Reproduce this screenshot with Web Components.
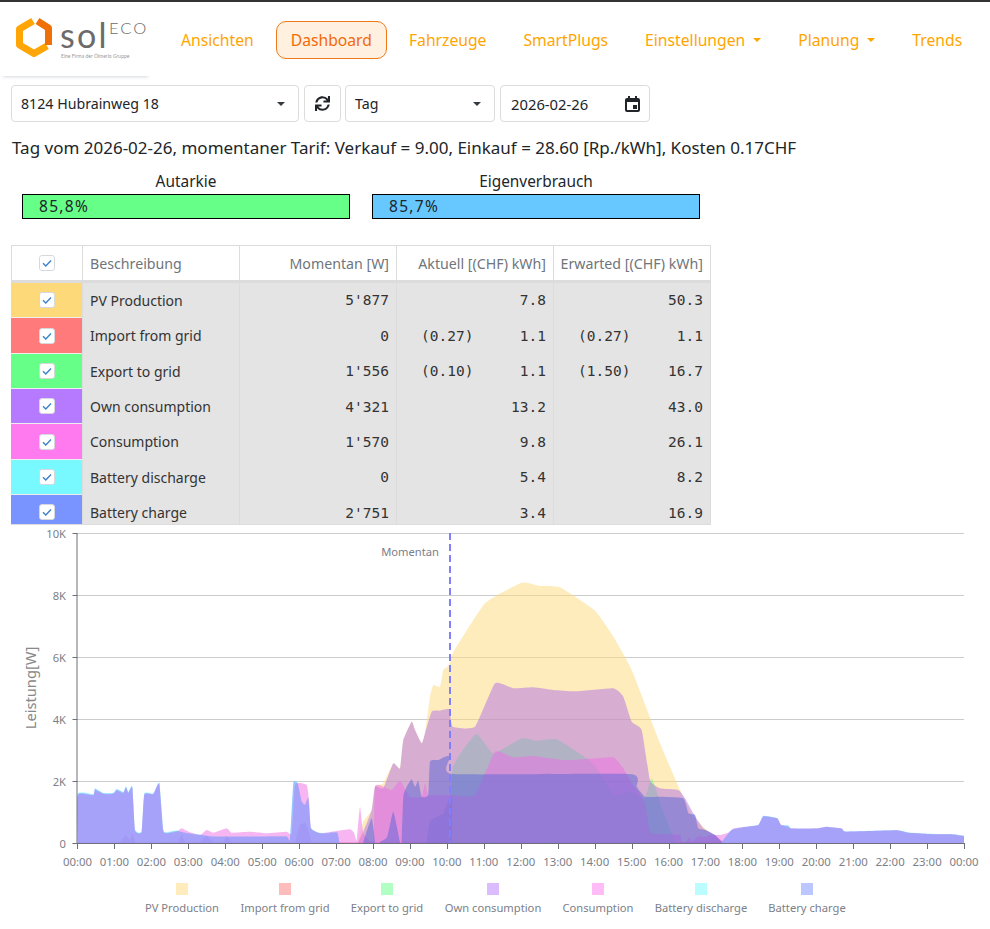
<!DOCTYPE html>
<html lang="de">
<head>
<meta charset="utf-8">
<title>solECO Dashboard</title>
<style>
  html, body { margin: 0; background: #fff; }
  body { font-family: "Noto Sans", "Open Sans", sans-serif; color: #212529; }
</style>
</head>
<body>
<app-navbar>
  <nav-link>Ansichten</nav-link>
  <nav-link active>Dashboard</nav-link>
  <nav-link>Fahrzeuge</nav-link>
  <nav-link>SmartPlugs</nav-link>
  <nav-link caret>Einstellungen</nav-link>
  <nav-link caret>Planung</nav-link>
  <nav-link>Trends</nav-link>
</app-navbar>

<control-bar></control-bar>

<page-title>Tag vom 2026-02-26, momentaner Tarif: Verkauf = 9.00, Einkauf = 28.60 [Rp./kWh], Kosten 0.17CHF</page-title>

<gauge-row>
  <gauge-bar label="Autarkie" color="#66ff88">85,8%</gauge-bar>
  <gauge-bar label="Eigenverbrauch" color="#66c8ff">85,7%</gauge-bar>
</gauge-row>

<energy-table>
  <energy-row color="#fdd97a" now="5'877" cur="7.8" exp="50.3">PV Production</energy-row>
  <energy-row color="#ff7a7a" now="0" curcost="(0.27)" cur="1.1" expcost="(0.27)" exp="1.1">Import from grid</energy-row>
  <energy-row color="#66ff88" now="1'556" curcost="(0.10)" cur="1.1" expcost="(1.50)" exp="16.7">Export to grid</energy-row>
  <energy-row color="#b57aff" now="4'321" cur="13.2" exp="43.0">Own consumption</energy-row>
  <energy-row color="#ff7aee" now="1'570" cur="9.8" exp="26.1">Consumption</energy-row>
  <energy-row color="#77f9ff" now="0" cur="5.4" exp="8.2">Battery discharge</energy-row>
  <energy-row color="#7a94ff" now="2'751" cur="3.4" exp="16.9">Battery charge</energy-row>
</energy-table>

<energy-chart></energy-chart>

<script>
const CHECK = `<svg width="16" height="16" viewBox="0 0 16 16"><rect x=".5" y=".5" width="15" height="15" rx="2.5" fill="#fff" stroke="#d5d9de"/><path d="M4 8.2l2.8 2.7L12 5.4" fill="none" stroke="#3c82c8" stroke-width="1.4"/></svg>`;

class AppNavbar extends HTMLElement {
  constructor(){
    super();
    this.attachShadow({mode:"open"});
    this.shadowRoot.innerHTML = `
    <style>
      :host { display: flex; border-top: 2px solid #333; height: 74px; background: #fff; }
      .logo { flex: 0 0 151px; height: 74px; box-shadow: 0 4px 3px -3px rgba(30,40,80,.18); }
      svg { display: block; }
      nav { display: flex; align-items: center; margin-left: 11.5px; height: 76px; }
    </style>
    <div class="logo">
      <svg width="151" height="74" viewBox="0 2 151 74">
        <polyline points="33,21 19.500,29 19.500,45 34,53.500 47,46" fill="none" stroke="#ffa506" stroke-width="7" stroke-linejoin="round"/>
        <polyline points="37.500,21 48.500,28 48.500,45" fill="none" stroke="#f07008" stroke-width="7" stroke-linejoin="round"/>
        <text x="60" y="48" font-family="Lato, sans-serif" font-size="34" fill="#6b6b6b" letter-spacing="2.200">sol</text>
        <text x="109" y="34" font-family="Lato, sans-serif" font-weight="300" font-size="16.500" fill="#6b6b6b" letter-spacing="2">ECO</text>
        <text x="61" y="58" font-family="Lato, sans-serif" font-size="5" fill="#999">Eine Firma der Ölmerlo Gruppe</text>
      </svg>
    </div>
    <nav><slot></slot></nav>`;
  }
}

class NavLink extends HTMLElement {
  constructor(){
    super();
    this.attachShadow({mode:"open"});
  }
  connectedCallback(){
    this.shadowRoot.innerHTML = `
    <style>
      :host { display: block; margin: 0 3.5px; }
      div { display: flex; align-items: center; gap: 8px; height: 36px; padding: 0 14px; border: 1px solid transparent; border-radius: 10px;
            color: #ffa500; font-size: 15.700px; white-space: nowrap; }
      :host([active]) div { border-color: #f07a1a; background: #fff0e0; color: #f26a08; }
      i { width: 0; height: 0; border: 4px solid transparent; border-top-color: #ffa500; border-bottom: 0; }
    </style>
    <div><slot></slot>${this.hasAttribute("caret") ? "<i></i>" : ""}</div>`;
  }
}

class ControlBar extends HTMLElement {
  constructor(){
    super();
    this.attachShadow({mode:"open"});
    this.shadowRoot.innerHTML = `
    <style>
      :host { display: flex; gap: 5px; margin: 9px 0 0 11px; font-size: 14.200px; color: #212529; }
      .box { box-sizing: border-box; height: 37px; border: 1px solid #dcdcdc; border-radius: 4px; display: flex; align-items: center; justify-content: space-between; padding: 0 9px; background: #fff; }
      .site { width: 288px; }
      .btn { width: 37px; justify-content: center; padding: 0; margin-right: -1px; }
      .mode { width: 150px; padding-left: 9px; }
      .date { width: 150px; padding-left: 10px; font-size: 14.800px; }
      i { width: 0; height: 0; border: 4px solid transparent; border-top-color: #343a40; border-bottom: 0; margin-right: 4px; }
      svg { display: block; }
    </style>
    <div class="box site"><span>8124 Hubrainweg 18</span><i></i></div>
    <div class="box btn">
      <svg width="15" height="15" viewBox="0 0 512 512"><path fill="#212529" d="M440.65 12.57l4 82.77A247.16 247.16 0 0 0 255.83 8C134.73 8 33.91 94.92 12.29 209.82A12 12 0 0 0 24.09 224h49.05a12 12 0 0 0 11.67-9.26 175.91 175.91 0 0 1 317-56.94l-101.46-4.86a12 12 0 0 0-12.57 12v47.41a12 12 0 0 0 12 12H500a12 12 0 0 0 12-12V12a12 12 0 0 0-12-12h-47.37a12 12 0 0 0-11.98 12.57zM255.83 432a175.61 175.61 0 0 1-146-77.8l101.8 4.87a12 12 0 0 0 12.57-12v-47.4a12 12 0 0 0-12-12H12a12 12 0 0 0-12 12V500a12 12 0 0 0 12 12h47.35a12 12 0 0 0 12-12.6l-4.15-82.57A247.17 247.17 0 0 0 255.83 504c121.11 0 221.93-86.92 243.55-201.82a12 12 0 0 0-11.8-14.18h-49.05a12 12 0 0 0-11.67 9.26A175.86 175.86 0 0 1 255.83 432z"/></svg>
    </div>
    <div class="box mode"><span>Tag</span><i></i></div>
    <div class="box date"><span>2026-02-26</span>
      <svg width="15" height="16" viewBox="0 0 15 16"><path fill="#212529" d="M3 0h2v2h5V0h2v2h1a2 2 0 0 1 2 2v10a2 2 0 0 1-2 2H2a2 2 0 0 1-2-2V4a2 2 0 0 1 2-2h1z"/><rect x="2" y="6" width="11" height="8" fill="#fff"/><rect x="8" y="9" width="4" height="4" fill="#212529"/></svg>
    </div>`;
  }
}

class PageTitle extends HTMLElement {
  constructor(){
    super();
    this.attachShadow({mode:"open"});
    this.shadowRoot.innerHTML = `
    <style>
      :host { display: block; margin: 14px 0 0 12px; font-size: 17px; line-height: 24px; color: #212529; white-space: nowrap; }
    </style>
    <slot></slot>`;
  }
}

class GaugeRow extends HTMLElement {
  constructor(){
    super();
    this.attachShadow({mode:"open"});
    this.shadowRoot.innerHTML = `
    <style>
      :host { display: flex; gap: 22px; margin: 12px 0 0 22px; }
    </style>
    <slot></slot>`;
  }
}

class GaugeBar extends HTMLElement {
  constructor(){
    super();
    this.attachShadow({mode:"open"});
  }
  connectedCallback(){
    this.shadowRoot.innerHTML = `
    <style>
      :host { display: block; width: 328px; font-size: 15.400px; color: #212529; }
      .label { text-align: center; line-height: 20px; }
      .bar { box-sizing: border-box; height: 25px; margin-top: 2px; border: 1px solid #000; background: ${this.getAttribute("color")}; padding-left: 16px; line-height: 23px; font-size: 15.500px; letter-spacing: 1.300px; }
    </style>
    <div class="label">${this.getAttribute("label")}</div>
    <div class="bar"><slot></slot></div>`;
  }
}

const COLS = "71px 157px 157px 157px 158px";

class EnergyTable extends HTMLElement {
  constructor(){
    super();
    this.attachShadow({mode:"open"});
    this.shadowRoot.innerHTML = `
    <style>
      :host { display: block; box-sizing: border-box; width: 700px; height: 280px; overflow: hidden; margin: 26px 0 0 11px; font-size: 14.200px; border-bottom: 1px solid #dcdcdc; }
      .head { display: grid; grid-template-columns: ${COLS}; height: 38px; box-sizing: border-box; border: solid #dcdcdc; border-width: 1px 0 3px; color: #6f757b; }
      .head div { display: flex; align-items: center; justify-content: flex-end; padding: 0 7px; border-left: 1px solid #dcdcdc; box-sizing: border-box; white-space: nowrap; }
      .head div:last-child { border-right: 1px solid #dcdcdc; }
      .head .chk { justify-content: center; padding: 0; }
      .head .txt { justify-content: flex-start; }
      svg { display: block; }
    </style>
    <div class="head">
      <div class="chk">${CHECK}</div>
      <div class="txt">Beschreibung</div>
      <div>Momentan [W]</div>
      <div>Aktuell [(CHF) kWh]</div>
      <div>Erwarted [(CHF) kWh]</div>
    </div>
    <slot></slot>`;
  }
}

class EnergyRow extends HTMLElement {
  constructor(){
    super();
    this.attachShadow({mode:"open"});
  }
  connectedCallback(){
    const a = n => this.getAttribute(n) || "";
    this.shadowRoot.innerHTML = `
    <style>
      :host { display: grid; grid-template-columns: ${COLS}; height: 35.35px; background: #e4e4e4; color: #333; font-size: 14px; }
      :host > div, div.c { box-sizing: border-box; display: flex; align-items: center; border-left: 1px solid #dcdcdc; padding: 0 7px .4px; }
      .sw { justify-content: center; padding: 0 !important; background: ${a("color")}; border: 0 !important; border-bottom: 1px solid #eee !important; }
      .num { justify-content: flex-end; font-family: "DejaVu Sans Mono", "Liberation Mono", monospace; font-size: 14.500px; color: #333; }
      .num b { font-weight: 400; }
      .num.split { justify-content: space-between; padding-left: 24px; }
      svg { display: block; }
    </style>
    <div class="sw">${CHECK}</div>
    <div class="c"><slot></slot></div>
    <div class="c num">${a("now")}</div>
    <div class="c num ${a("curcost") ? "split" : ""}">${a("curcost") ? `<b>${a("curcost")}</b>` : ""}<b>${a("cur")}</b></div>
    <div class="c num ${a("expcost") ? "split" : ""}" style="border-right:1px solid #dcdcdc">${a("expcost") ? `<b>${a("expcost")}</b>` : ""}<b>${a("exp")}</b></div>`;
  }
}

// chart outlines, traced from the reference at 3x: [x, y] pairs, y 969 is the zero line
const left = s => s.trim().split(/\s+/).map(p => p.split(",").map(Number));
const shift = (s, dx) => left(s).map(([x, y]) => [x + dx, y]);

const nightA = `233,823 280,824 285,806 310,820 340,820 350,808 370,817 378,800 385,817 397,800 405,930 425,935 433,822 460,822 478,790 490,930 500,938 530,933 560,940 600,945 640,950 720,950 800,950 860,950 870,958 880,790 893,790 905,845 915,855 925,835 933,925 960,940 990,940`;
const nightB = `185,966 215,930 250,922 295,915 310,888 352,895 362,915 385,917 395,926 470,926 500,921 545,926 558,935 710,931 745,938 830,943 875,943 912,948`;

// legend colours
const SERIES = [
  { name: "PV Production", color: "#fdd97a" },
  { name: "Import from grid", color: "#ff7a7a" },
  { name: "Export to grid", color: "#66ff88" },
  { name: "Own consumption", color: "#b57aff" },
  { name: "Consumption", color: "#ff7aee" },
  { name: "Battery discharge", color: "#77f9ff" },
  { name: "Battery charge", color: "#7a90ff" }
];

// areas, bottom one first
const LAYERS = [
  { fill: "#fdd97a", parts: [[
    ...shift("85,960 100,905 125,870 135,800 160,790 190,730 210,745 220,660 245,605 255,630 275,670 285,640 300,530 310,495 330,500 340,450 358,435 368,400 465,250 575,188 630,198 690,202 795,272 850,350 905,450 990,670", 990),
    ...shift("60,810 100,890 140,930 190,966", 1980)
  ]] },
  { fill: "#ff7a7a", parts: [
    shift("233,967 1000,966 1900,966 2400,965", 0)
  ] },
  { fill: "#66ff88", parts: [[
    ...shift("360,966 368,745 438,642 490,700 575,655 620,662 680,658 770,715 800,745 850,825 905,815 925,830 945,835 965,775 985,830", 990),
    ...shift("0,850 45,965", 1980)
  ]] },
  { fill: "#b070e6", parts: [
    shift("360,966 378,945 390,960 397,940 405,966", 0),
    shift("535,966 545,945 555,966", 0),
    shift("600,966 620,948 640,966", 0),
    shift("670,966 680,948 695,966", 0),
    shift("885,966 900,915 915,908 925,930 935,966", 0),
    [
      ...shift("85,966 100,935 125,870 135,800 160,805 190,730 210,745 220,660 245,605 255,630 275,670 285,640 305,575 330,572 358,568 368,620 435,620 495,490 550,505 610,502 670,510 740,514 850,505 880,530 905,605 935,630 960,780 990,805", 990),
      ...shift("55,810 75,835 100,880 130,925 165,945 190,966", 1980)
    ]
  ] },
  { fill: "#77f9ff", parts: [
    shift("233,968 " + nightA, 0).map(([x, y]) => [x, y - 2]),
    shift("0,936 22,936 28,966", 990),
    shift(nightB, 1980).map(([x, y]) => [x, y - 1])
  ] },
  { fill: "#f06ee6", parts: [[
    ...shift("233,968 233,826 280,826 285,810 310,822 340,822 350,812 370,820 378,803 385,820 397,803 405,932 425,937 433,825 460,822 478,792 490,935 530,935 545,925 570,937 600,945 620,930 640,938 680,925 695,938 750,935 800,940 860,935 875,940 885,795 920,795 928,850 933,925 960,940", 0),
    ...shift("20,933 60,928 72,938 80,960 90,860 100,940 130,965 135,800 160,800 185,810 210,782 240,830 275,830 285,790 295,825 340,825 366,825 435,825 495,695 550,712 610,708 700,720 780,716 850,712 880,745 905,790 925,815 945,850 960,935 990,942", 990),
    ...shift("60,945 65,965 78,965 88,952 98,965 115,948 135,952 150,945 180,945 205,938 222,925 260,920 295,915 310,890 350,895 365,915 395,925 470,925 500,920 545,925 558,935 710,931 745,938 830,943 875,943 912,948", 1980)
  ]] },
  { fill: "#7a90ff", parts: [
    shift("233,968 " + nightA, 0),
    shift("0,938 22,938 28,966", 990),
    shift(nightB, 1980)
  ] },
  { fill: "#5a64d7", parts: [
    shift("100,966 125,895 135,966", 990),
    shift("150,966 172,950 190,875 210,966", 990),
    [
      ...shift("215,966 220,830 230,800 245,778 255,800 265,782 275,830 295,825 300,725 325,720 345,710 362,710 366,762 900,762 920,800 945,830 990,830", 990),
      ...shift("70,835 85,880 105,885 115,925 135,930 165,945 185,966", 1980)
    ]
  ] },
  { fill: "#5a64d7", opacity: .2, parts: [
    shift("290,966 300,905 320,890 340,880 358,835 366,835 366,966", 990)
  ] }
];

const TOP = 525;  // page y where the svg starts
const py = y => (y / 3 + 520 - TOP);
const px = x => x / 3;

function outline(points){
  const pts = [...points];
  const last = pts[pts.length - 1][0];
  let d = `M${px(pts[0][0]).toFixed(1)},${py(969).toFixed(1)}L${px(pts[0][0]).toFixed(1)},${py(pts[0][1]).toFixed(1)}`;
  for (let i = 0; i < pts.length - 1; i++) {
    const p0 = pts[Math.max(i - 1, 0)], p1 = pts[i], p2 = pts[i + 1], p3 = pts[Math.min(i + 2, pts.length - 1)];
    const c1 = [p1[0] + (p2[0] - p0[0]) / 14, p1[1] + (p2[1] - p0[1]) / 14];
    const c2 = [p2[0] - (p3[0] - p1[0]) / 14, p2[1] - (p3[1] - p1[1]) / 14];
    d += `C${px(c1[0]).toFixed(1)},${py(c1[1]).toFixed(1)} ${px(c2[0]).toFixed(1)},${py(c2[1]).toFixed(1)} ${px(p2[0]).toFixed(1)},${py(p2[1]).toFixed(1)}`;
  }
  return d + `L${px(last).toFixed(1)},${py(969).toFixed(1)}Z`;
}

class EnergyChart extends HTMLElement {
  constructor(){
    super();
    this.attachShadow({mode:"open"});
  }
  connectedCallback(){
    const x0 = 77.5, x1 = 964, dx = (x1 - x0) / 24, base = 843 - TOP;
    let grid = "", labels = "";
    [0, 2, 4, 6, 8, 10].forEach(v => {
      const y = base - v * 31;
      if (v) grid += `<line x1="${x0}" x2="${x1}" y1="${y + .5}" y2="${y + .5}" stroke="#ccc"/>`;
      grid += `<line x1="${x0 - 5}" x2="${x0}" y1="${y + .5}" y2="${y + .5}" stroke="#6e7079"/>`;
      labels += `<text x="66" y="${y + 4.500}" text-anchor="end">${v ? v + "K" : 0}</text>`;
    });
    for (let h = 0; h <= 24; h++) {
      const x = Math.round(x0 + h * dx) + .5 - (h === 0 ? 1 : 0);
      grid += `<line x1="${x}" x2="${x}" y1="${base}" y2="${base + 6}" stroke="#6e7079"/>`;
      labels += `<text class="hour" x="${(x0 + h * dx).toFixed(1)}" y="${base + 22.500}" text-anchor="middle">${String(h % 24).padStart(2, "0")}:00</text>`;
    }
    const areas = LAYERS.map(s => `<path fill="${s.fill}" fill-opacity="${s.opacity || .5}" d="${s.parts.map(outline).join("")}"/>`).join("");
    const centers = [182, 285, 387, 493, 598, 701, 807];
    const legend = SERIES.map((s, i) => `
      <rect x="${centers[i] - 6}" y="${883 - TOP}" width="12" height="12" fill="${s.color}" fill-opacity=".5"/>
      <text x="${centers[i]}" y="${912 - TOP}" text-anchor="middle">${s.name}</text>`).join("");
    this.shadowRoot.innerHTML = `
    <style>
      :host { display: block; height: ${929 - TOP}px; }
      svg { display: block; }
      text { font-family: "Noto Sans", "Open Sans", sans-serif; font-size: 11.200px; fill: #7c8088; }
      .hour { font-size: 11.400px; }
      .axis-name { font-size: 14.700px; fill: #888; }
    </style>
    <svg width="990" height="${929 - TOP}" viewBox="0 0 990 ${929 - TOP}">
      ${grid}
      ${areas}
      <line x1="${x0 - .5}" x2="${x0 - .5}" y1="${533 - TOP}" y2="${base + .5}" stroke="#6e7079"/>
      <line x1="${x0}" x2="${x1}" y1="${base + .5}" y2="${base + .5}" stroke="#6e7079"/>
      <line x1="450" x2="450" y1="${533 - TOP}" y2="${base}" stroke="#8080ff" stroke-width="2" stroke-dasharray="7 4"/>
      <text x="439" y="${556 - TOP}" text-anchor="end">Momentan</text>
      ${labels}
      <text class="axis-name" transform="translate(36 ${688 - TOP}) rotate(-90)" text-anchor="middle">Leistung[W]</text>
      ${legend}
    </svg>`;
  }
}

customElements.define("app-navbar", AppNavbar);
customElements.define("nav-link", NavLink);
customElements.define("control-bar", ControlBar);
customElements.define("page-title", PageTitle);
customElements.define("gauge-row", GaugeRow);
customElements.define("gauge-bar", GaugeBar);
customElements.define("energy-table", EnergyTable);
customElements.define("energy-row", EnergyRow);
customElements.define("energy-chart", EnergyChart);
</script>
</body>
</html>
